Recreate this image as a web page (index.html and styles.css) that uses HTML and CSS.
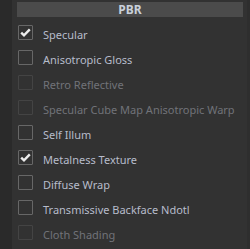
FILE: index.html
```html
<!DOCTYPE html>
<html lang="en">
  <head>
    <meta charset="UTF-8" />
    <meta name="viewport" content="width=device-width, initial-scale=1.0" />
    <title>PBR</title>
    <link rel="stylesheet" href="styles.css">
  </head>
  <body>
    <div class="layout">
      <div class="gutter"></div>
      <div class="panel">
        <div class="header">PBR</div>
        <div class="options">
          <div class="option">
            <span class="box checked">
              <svg viewBox="0 0 13 13"><polyline points="2.2,6.6 5,9.4 10.8,3.4"></polyline></svg>
            </span>
            <span class="label">Specular</span>
          </div>
          <div class="option">
            <span class="box"></span>
            <span class="label">Anisotropic Gloss</span>
          </div>
          <div class="option disabled">
            <span class="box"></span>
            <span class="label">Retro Reflective</span>
          </div>
          <div class="option disabled">
            <span class="box"></span>
            <span class="label">Specular Cube Map Anisotropic Warp</span>
          </div>
          <div class="option">
            <span class="box"></span>
            <span class="label">Self Illum</span>
          </div>
          <div class="option">
            <span class="box checked">
              <svg viewBox="0 0 13 13"><polyline points="2.2,6.6 5,9.4 10.8,3.4"></polyline></svg>
            </span>
            <span class="label">Metalness Texture</span>
          </div>
          <div class="option">
            <span class="box"></span>
            <span class="label">Diffuse Wrap</span>
          </div>
          <div class="option">
            <span class="box"></span>
            <span class="label">Transmissive Backface Ndotl</span>
          </div>
          <div class="option disabled">
            <span class="box"></span>
            <span class="label">Cloth Shading</span>
          </div>
        </div>
      </div>
      <div class="edge"></div>
    </div>
  </body>
</html>
```

FILE: styles.css
```css
* {
  margin: 0;
  padding: 0;
  box-sizing: border-box;
}

body {
  width: 250px;
  height: 249px;
  font-family: "Noto Sans", "Open Sans", sans-serif;
  background: #2a2a2a;
  overflow: hidden;
}

.layout {
  display: flex;
  height: 249px;
}

.gutter {
  width: 12px;
  background: #2a2a2a;
}

.panel {
  flex: 1;
  background: #323232;
  padding-top: 2px;
}

.edge {
  width: 3px;
  background: #2e2e2e;
}

.header {
  height: 15px;
  margin: 0 4px 0 5px;
  background: #4b4b4b;
  color: #c9d0da;
  font-size: 12px;
  font-weight: 700;
  line-height: 15px;
  text-align: center;
}

.options {
  margin-top: 3px;
  padding-left: 6px;
}

.option {
  height: 25px;
  display: flex;
  align-items: center;
  gap: 10px;
}

.box {
  width: 15px;
  height: 15px;
  border: 1px solid #676767;
  border-radius: 1px;
  flex-shrink: 0;
  display: flex;
}

.box svg {
  width: 13px;
  height: 13px;
  fill: none;
  stroke: #ececec;
  stroke-width: 2.4;
}

.label {
  font-size: 11px;
  color: #b7bccb;
  padding-top: 3px;
  white-space: nowrap;
}

.option.disabled .box {
  border-color: #444444;
}

.option.disabled .label {
  color: #717379;
}
```
